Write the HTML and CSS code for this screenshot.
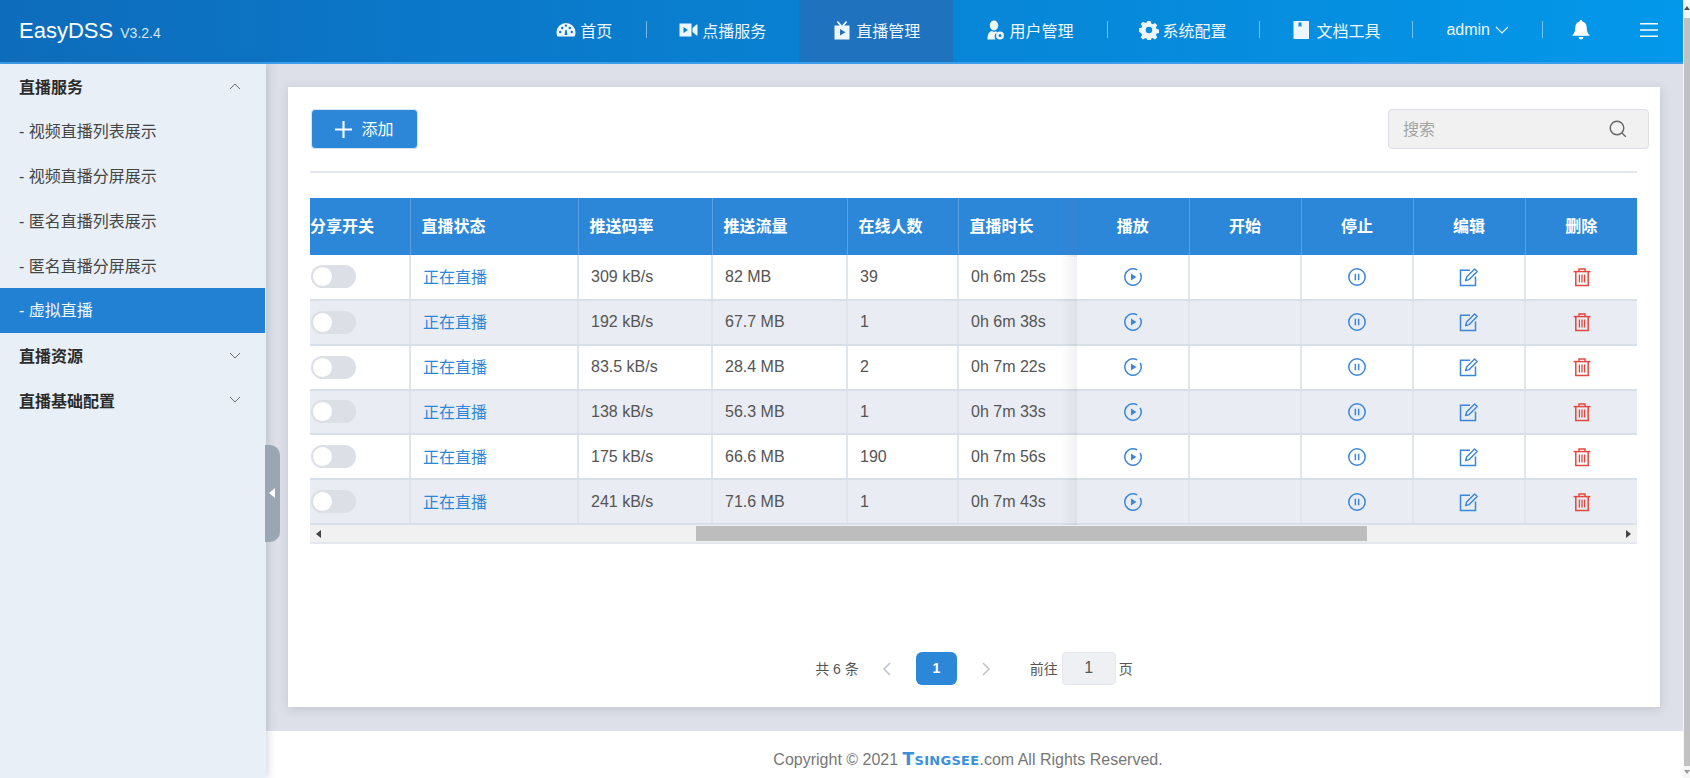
FILE: index.html
```html
<!DOCTYPE html>
<html lang="zh-CN">
<head>
    <meta charset="UTF-8">
    <meta name="viewport" content="width=device-width, initial-scale=1.0">
    <title>EasyDSS</title>
    <link rel="stylesheet" href="styles.css">
</head>
<body>
    <svg class="icon-defs" aria-hidden="true">
        <symbol id="i-play" viewBox="0 0 20 20">
            <circle cx="10" cy="10" r="8.2" fill="none" stroke="currentColor" stroke-width="1.5" stroke-dasharray="47 4.5" transform="rotate(-30 10 10)"/>
            <path d="M8 6.400v7.200l5.400-3.600z" fill="currentColor"/>
        </symbol>
        <symbol id="i-pause" viewBox="0 0 20 20">
            <circle cx="10" cy="10" r="8.2" fill="none" stroke="currentColor" stroke-width="1.5"/>
            <path d="M7.600 6.800h1.500v6.400H7.600zM10.900 6.800h1.500v6.400h-1.500z" fill="currentColor"/>
        </symbol>
        <symbol id="i-edit" viewBox="0 0 20 20">
            <path d="M11 3.200H1.500v15.300h15V9.500" fill="none" stroke="currentColor" stroke-width="1.500"/>
            <path d="M6.600 13.600l1-3.600 8-8 2.600 2.600-8 8z" fill="none" stroke="currentColor" stroke-width="1.400" stroke-linejoin="round"/>
        </symbol>
        <symbol id="i-trash" viewBox="0 0 20 20">
            <path d="M1.600 4.600h16.800" fill="none" stroke="currentColor" stroke-width="1.500"/>
            <path d="M7 4.400V2h6v2.400" fill="none" stroke="currentColor" stroke-width="1.400"/>
            <path d="M3.800 4.600v14h12.400v-14" fill="none" stroke="currentColor" stroke-width="1.500"/>
            <path d="M7.400 7.600v8M10 7.600v8M12.600 7.600v8" fill="none" stroke="currentColor" stroke-width="1.300"/>
        </symbol>
    </svg>

    <div class="app">
        <header class="topbar">
            <div class="logo">EasyDSS <small>V3.2.4</small></div>
            <nav class="nav">
                <a class="nav-item sep nav-home">
                    <svg class="nav-icon" viewBox="0 0 20 20" fill="currentColor"><path fill-rule="evenodd" d="M10 3a9.500 9.500 0 0 0-9.500 9.500c0 1.500.4 2.900 1 4h17c.6-1.100 1-2.500 1-4A9.500 9.500 0 0 0 10 3zM4.200 13.200a1.200 1.200 0 1 1 0-2.400 1.200 1.200 0 0 1 0 2.400zm2-4a1.200 1.200 0 1 1 0-2.400 1.200 1.200 0 0 1 0 2.400zM10 6.800a1.200 1.200 0 1 1 0-2.400 1.200 1.200 0 0 1 0 2.400zm1.400 8.200H8.600l.7-5h1.400zm4.400-1.800a1.200 1.200 0 1 1 0-2.400 1.200 1.200 0 0 1 0 2.400zm-2-4a1.200 1.200 0 1 1 0-2.400 1.200 1.200 0 0 1 0 2.400z"/></svg>
                    首页
                </a>
                <a class="nav-item">
                    <svg class="nav-icon" viewBox="0 0 20 20" fill="currentColor"><path fill-rule="evenodd" d="M1.500 3.500h12v13h-12zM5.500 7v6l4.500-3z"/><path d="M14.500 8l4-3.500h1v11h-1l-4-3.500z"/></svg>
                    点播服务
                </a>
                <a class="nav-item active">
                    <svg class="nav-icon" viewBox="0 0 20 20" fill="currentColor"><path fill-rule="evenodd" d="M2.500 5.500h5.200L4.800 2l1.200-1 4 4.500L14 1l1.200 1-2.900 3.500h5.200v14h-15zM8 9v6.500l5.500-3.200z"/></svg>
                    直播管理
                </a>
                <a class="nav-item sep nav-user">
                    <svg class="nav-icon" viewBox="0 0 20 20" fill="currentColor"><ellipse cx="9" cy="5.500" rx="4.200" ry="5"/><path d="M2.500 19.500c0-4.500 1-8 4.500-8.500l2 .9 1.800-.7c.7.300 1.300.6 1.700 1a4.800 4.800 0 0 0-2 7.300z"/><path fill-rule="evenodd" d="M15 11.500a4 4 0 1 0 0 8 4 4 0 0 0 0-8zm0 2.500a1.500 1.500 0 1 1 0 3 1.500 1.500 0 0 1 0-3z"/></svg>
                    用户管理
                </a>
                <a class="nav-item sep nav-config">
                    <svg class="nav-icon" viewBox="0 0 20 20" fill="currentColor"><path fill-rule="evenodd" d="M8.300 1h3.400l.5 2.600 1.500.7 2.300-1.400 2.300 2.300-1.400 2.300.7 1.500 2.600.5v3.400l-2.600.5-.7 1.500 1.400 2.300-2.300 2.300-2.300-1.400-1.500.7-.5 2.600H8.300l-.5-2.600-1.500-.7-2.300 1.400-2.300-2.300 1.400-2.300-.7-1.500L-.2 11.700V8.300l2.600-.5.7-1.500-1.400-2.300 2.300-2.300 2.300 1.400 1.500-.7zM10 6.800a3.200 3.200 0 1 0 0 6.400 3.200 3.200 0 0 0 0-6.400z"/></svg>
                    系统配置
                </a>
                <a class="nav-item sep nav-doc">
                    <svg class="nav-icon" viewBox="0 0 20 20" fill="currentColor"><path fill-rule="evenodd" d="M2.500 1h15.500v18H2.500zM7.500 2.500v4.500l1.500-1 1.500 1V2.500z"/></svg>
                    文档工具
                </a>
                <a class="nav-item sep nav-admin">
                    admin
                    <svg class="chevron" viewBox="0 0 14 8" fill="none" stroke="currentColor" stroke-width="1.200"><path d="M1 1l6 6 6-6"/></svg>
                </a>
                <a class="nav-tool bell">
                    <svg viewBox="0 0 18 20" fill="currentColor"><path d="M9 0a1.300 1.300 0 0 0-1.300 1.400C4.900 2 3.300 4.200 3.300 7.400c0 4.600-1.500 6.200-2.800 7.400v1h17v-1c-1.300-1.200-2.800-2.800-2.800-7.400 0-3.200-1.600-5.400-4.400-6A1.300 1.300 0 0 0 9 0zM6.500 17a2.500 2.500 0 0 0 5 0z"/></svg>
                </a>
                <a class="nav-tool menu">
                    <svg viewBox="0 0 18 14" fill="currentColor"><path d="M0 0h18v1.600H0zM0 6.200h18v1.600H0zM0 12.400h18V14H0z"/></svg>
                </a>
            </nav>
        </header>

        <div class="layout">
            <aside class="sidebar">
                <div class="menu-title">直播服务
                    <svg class="menu-arrow" viewBox="0 0 12 7" fill="none" stroke="currentColor"><path d="M1 6l5-5 5 5"/></svg>
                </div>
                <div class="menu-item">- 视频直播列表展示</div>
                <div class="menu-item">- 视频直播分屏展示</div>
                <div class="menu-item">- 匿名直播列表展示</div>
                <div class="menu-item">- 匿名直播分屏展示</div>
                <div class="menu-item selected">- 虚拟直播</div>
                <div class="menu-title">直播资源
                    <svg class="menu-arrow" viewBox="0 0 12 7" fill="none" stroke="currentColor"><path d="M1 1l5 5 5-5"/></svg>
                </div>
                <div class="menu-title">直播基础配置
                    <svg class="menu-arrow" viewBox="0 0 12 7" fill="none" stroke="currentColor"><path d="M1 1l5 5 5-5"/></svg>
                </div>
                <div class="collapse-handle"></div>
            </aside>

            <div class="content">
                <main class="main">
                    <section class="card">
                        <div class="toolbar">
                            <button class="add-btn">
                                <svg viewBox="0 0 16 16" fill="currentColor"><path d="M7 0h2v7h7v2H9v7H7V9H0V7h7z"/></svg>
                                <span>添加</span>
                            </button>
                            <div class="search">
                                <span>搜索</span>
                                <svg viewBox="0 0 18 18" fill="none" stroke="currentColor" stroke-width="1.400"><circle cx="8" cy="8" r="6.800"/><path d="M13 13l3.800 3.800"/></svg>
                            </div>
                        </div>

                        <div class="table-wrap">
                            <table class="live-table">
                                <colgroup>
                                    <col class="c-share"><col class="c-status"><col class="c-rate"><col class="c-flow"><col class="c-online"><col class="c-time">
                                    <col class="c-op"><col class="c-op"><col class="c-op"><col class="c-op"><col class="c-op">
                                </colgroup>
                                <thead>
                                    <tr>
                                        <th class="share">分享开关</th><th>直播状态</th><th>推送码率</th><th>推送流量</th><th>在线人数</th><th>直播时长</th>
                                        <th class="op first-op">播放</th><th class="op">开始</th><th class="op">停止</th><th class="op">编辑</th><th class="op">删除</th>
                                    </tr>
                                </thead>
                                <tbody id="rows"></tbody>
                            </table>
                            <div class="hscroll">
                                <span class="arrow-left"></span>
                                <div class="hscroll-track"><div class="hscroll-thumb"></div></div>
                                <span class="arrow-right"></span>
                            </div>
                        </div>

                        <div class="pager">
                            <span class="pager-text">共 6 条</span>
                            <svg class="pager-arrow prev" viewBox="0 0 9 14" fill="none" stroke="currentColor" stroke-width="1.600"><path d="M8 1L2 7l6 6"/></svg>
                            <span class="page-num">1</span>
                            <svg class="pager-arrow next" viewBox="0 0 9 14" fill="none" stroke="currentColor" stroke-width="1.600"><path d="M1 1l6 6-6 6"/></svg>
                            <span class="pager-text goto">前往</span>
                            <span class="page-input">1</span>
                            <span class="pager-text page-unit">页</span>
                        </div>
                    </section>
                </main>
                <footer class="footer">Copyright © 2021 <span class="brand"><b>T</b>SINGSEE</span>.com All Rights Reserved.</footer>
            </div>
        </div>
    </div>

    <div class="page-scroll">
        <span class="page-scroll-up"></span>
        <div class="page-scroll-thumb"></div>
        <span class="page-scroll-down"></span>
    </div>

    <script>
        const streams = [
            ['309 kB/s', '82 MB', '39', '0h 6m 25s'],
            ['192 kB/s', '67.7 MB', '1', '0h 6m 38s'],
            ['83.5 kB/s', '28.4 MB', '2', '0h 7m 22s'],
            ['138 kB/s', '56.3 MB', '1', '0h 7m 33s'],
            ['175 kB/s', '66.6 MB', '190', '0h 7m 56s'],
            ['241 kB/s', '71.6 MB', '1', '0h 7m 43s']
        ];

        function iconCell(name, cls) {
            return `<td class="op ${cls}"><svg class="row-icon ${name}"><use href="#i-${name}"></use></svg></td>`;
        }

        // Build table rows
        document.getElementById('rows').innerHTML = streams.map(s => `
            <tr>
                <td class="share"><span class="switch"></span></td>
                <td><a class="live-link">正在直播</a></td>
                <td>${s[0]}</td><td>${s[1]}</td><td>${s[2]}</td><td>${s[3]}</td>
                ${iconCell('play', 'first-op')}
                <td class="op"></td>
                ${iconCell('pause', '')}
                ${iconCell('edit', '')}
                ${iconCell('trash', '')}
            </tr>`).join('');
    </script>
</body>
</html>
```
FILE: styles.css
```css
* {
    margin: 0;
    padding: 0;
    box-sizing: border-box;
}

html, body {
    height: 100%;
    overflow: hidden;
}

body {
    display: flex;
    font-family: 'Liberation Sans', 'Noto Sans CJK SC', sans-serif;
    font-size: 16px;
    color: #555;
}

.icon-defs {
    display: none;
}

.app {
    flex: 1;
    min-width: 0;
    display: flex;
    flex-direction: column;
}

/* top bar */
.topbar {
    height: 64px;
    flex: none;
    display: flex;
    align-items: center;
    justify-content: space-between;
    color: #fff;
    background: linear-gradient(90deg, #0e6cbc 0%, #0398ea 100%);
    border-bottom: 2px solid #3a9eec;
}

.logo {
    padding-left: 19px;
    font-size: 22px;
}

.logo small {
    font-size: 14px;
    margin-left: 1px;
    color: #d7e7f5;
}

.nav {
    display: flex;
    align-items: center;
    height: 100%;
}

.nav-item {
    position: relative;
    display: flex;
    align-items: center;
    height: 100%;
    padding: 0 33px 3px;
    color: #eef6fd;
}

.nav-item.sep::after {
    content: '';
    position: absolute;
    right: 0;
    top: 21px;
    height: 17px;
    width: 1px;
    background: rgba(255, 255, 255, 0.45);
}

.nav-home.sep::after {
    right: -2px;
}

.nav-user {
    padding-left: 32px;
}

.nav-user.sep::after {
    right: -2px;
}

.nav-config .nav-icon {
    margin-right: 3px;
}

.nav-config.sep::after {
    right: -1px;
}

.nav-doc {
    padding-left: 32px;
}

.nav-doc .nav-icon {
    margin-right: 5px;
}

.nav-admin {
    padding-left: 33px;
    padding-right: 34px;
}

.nav-item.active {
    background: #1f72bd;
}

.nav-icon {
    width: 20px;
    height: 20px;
    margin-right: 4px;
}

.chevron {
    width: 14px;
    height: 8px;
    margin-left: 5px;
}

.nav-tool {
    display: flex;
    align-items: center;
    padding-bottom: 2px;
}

.bell {
    margin-left: 29px;
}

.bell svg {
    width: 18px;
    height: 20px;
}

.menu {
    margin-left: 50px;
    margin-right: 25px;
}

.menu svg {
    width: 18px;
    height: 14px;
}

/* sidebar */
.layout {
    flex: 1;
    min-height: 0;
    display: flex;
}

.sidebar {
    position: relative;
    width: 266px;
    flex: none;
    padding-right: 1px;
    background: #e8eff7;
    box-shadow: 2px 0 8px rgba(90, 100, 120, 0.25);
    z-index: 2;
}

.menu-title,
.menu-item {
    display: flex;
    align-items: center;
    height: 44.8px;
    padding-left: 19px;
    color: #454545;
}

.menu-item {
    padding-bottom: 2px;
}

.menu-title {
    justify-content: space-between;
    padding-right: 24px;
    font-weight: bold;
    color: #2b2b2b;
}

.menu-arrow {
    width: 12px;
    height: 7px;
    color: #6d6d6d;
}

.menu-item.selected {
    background: #2381d4;
    color: #f2f7fc;
}

.collapse-handle {
    position: absolute;
    left: 100%;
    top: 381px;
    width: 15px;
    height: 97px;
    margin-left: -1px;
    background: #9ba6b4;
    border-radius: 0 10px 10px 0;
}

.collapse-handle::after {
    content: '';
    position: absolute;
    left: 4px;
    top: 43px;
    border: 5px solid transparent;
    border-left: 0;
    border-right: 6px solid #fff;
}

/* main area */
.content {
    flex: 1;
    min-width: 0;
    display: flex;
    flex-direction: column;
}

.main {
    flex: 1;
    min-height: 0;
    padding: 23px 23px 24px 22px;
    background: #dde0e8;
}

.card {
    display: flex;
    flex-direction: column;
    height: 100%;
    padding: 22px 23px 22px 22px;
    background: #fff;
    box-shadow: 0 2px 10px rgba(60, 70, 90, 0.18);
}

.toolbar {
    display: flex;
    justify-content: space-between;
    height: 64px;
    flex: none;
    border-bottom: 2px solid #e4e7ed;
}

.add-btn {
    display: flex;
    align-items: center;
    justify-content: center;
    gap: 9px;
    width: 107px;
    height: 40px;
    margin-left: 1px;
    border: 1px solid #d7e6f5;
    border-radius: 4px;
    background: #2d87d9;
    color: #fff;
    font: inherit;
}

.add-btn span {
    padding-bottom: 2px;
}

.add-btn svg {
    width: 17px;
    height: 17px;
}

.search {
    display: flex;
    align-items: center;
    justify-content: space-between;
    width: 261px;
    height: 40px;
    margin-right: -12px;
    padding: 0 21px 0 14px;
    background: #f1f1f1;
    border: 1px solid #dcdfe6;
    border-radius: 4px;
    color: #a3a3a3;
}

.search span {
    padding-bottom: 2px;
}

.search svg {
    width: 18px;
    height: 18px;
    color: #666;
}

/* table */
.table-wrap {
    margin-top: 25px;
    border-bottom: 2px solid #e4e7ed;
}

.live-table {
    width: 1327px;
    table-layout: fixed;
    border-collapse: collapse;
}

.c-share { width: 100px; }
.c-status { width: 168px; }
.c-rate { width: 134px; }
.c-flow { width: 135px; }
.c-online { width: 111px; }
.c-time { width: 119px; }
.c-op { width: 112px; }

.live-table th {
    height: 57px;
    padding: 0 0 3px 11px;
    text-align: left;
    color: #fff;
    background: #2d87d9;
    border-right: 1px solid #5a9fdf;
}

.live-table td {
    height: 44.85px;
    padding-left: 12px;
    color: #555;
    border-right: 2px solid #e0e5ec;
    border-bottom: 2px solid #d8dfe8;
}

.live-table tbody tr:nth-child(even) td {
    background: #e9ecf2;
}

.live-table th.share,
.live-table td.share {
    padding-left: 0;
}

.live-table th.op,
.live-table td.op {
    padding-left: 0;
    text-align: center;
}

.live-table th:last-child,
.live-table td:last-child {
    border-right: none;
}

/* the last scrolled column runs under the fixed ones, no line of its own */
.live-table th:nth-child(6),
.live-table td:nth-child(6) {
    border-right: none;
}

.first-op {
    position: relative;
}

.first-op::before {
    content: '';
    position: absolute;
    top: 0;
    bottom: -2px;
    right: 100%;
    width: 16px;
    background: linear-gradient(to left, rgba(110, 120, 140, 0.1), rgba(110, 120, 140, 0));
}

.live-link {
    position: relative;
    top: -1px;
    color: #2d87d9;
}

.switch {
    display: block;
    position: relative;
    width: 45px;
    height: 23px;
    margin-left: 1px;
    background: #dcdfe6;
    border-radius: 12px;
}

.switch::after {
    content: '';
    position: absolute;
    left: 2px;
    top: 2px;
    width: 19px;
    height: 19px;
    background: #fff;
    border-radius: 50%;
}

.row-icon {
    display: block;
    width: 20px;
    height: 20px;
    margin: 0 auto;
    color: #3b86d9;
}

.row-icon.trash {
    color: #e1483f;
}

.hscroll {
    display: flex;
    align-items: center;
    height: 17px;
    background: #f1f1f1;
}

.hscroll-track {
    flex: 1;
    height: 15px;
    padding-left: 369px;
}

.hscroll-thumb {
    width: 671px;
    height: 100%;
    background: #bdbdbd;
}

.arrow-left,
.arrow-right {
    width: 17px;
    height: 8px;
    position: relative;
}

.arrow-left::after,
.arrow-right::after {
    content: '';
    position: absolute;
    top: 0;
    left: 6px;
    border: 4px solid transparent;
}

.arrow-left::after {
    border-left: 0;
    border-right: 5px solid #444;
}

.arrow-right::after {
    border-right: 0;
    border-left: 5px solid #444;
}

/* pagination */
.pager {
    display: flex;
    align-items: center;
    justify-content: center;
    height: 33px;
    margin-top: auto;
    padding-left: 1px;
    font-size: 14px;
    color: #555;
}

.pager-text {
    padding-bottom: 2px;
}

.pager-arrow {
    width: 9px;
    height: 14px;
    color: #c0c4cc;
}

.prev {
    margin-left: 23px;
}

.page-num {
    width: 41px;
    height: 33px;
    margin-left: 25px;
    line-height: 32px;
    text-align: center;
    font-weight: bold;
    color: #fff;
    background: #2d87d9;
    border-radius: 6px;
}

.next {
    margin-left: 25px;
}

.goto {
    margin-left: 39px;
}

.page-input {
    width: 54px;
    height: 33px;
    margin-left: 4px;
    line-height: 30px;
    text-align: center;
    font-size: 16px;
    background: #eef0f4;
    border: 1px solid #e4e7ed;
    border-radius: 4px;
}

.page-unit {
    margin-left: 3px;
}

/* footer */
.footer {
    flex: none;
    height: 47px;
    padding-right: 13px;
    line-height: 56px;
    text-align: center;
    color: #777;
    background: #fff;
}

.brand {
    font-family: 'DejaVu Sans', sans-serif;
    font-weight: bold;
    font-size: 13px;
    letter-spacing: 0.3px;
    color: #3b8fdc;
}

.brand b {
    font-size: 17px;
}

/* page scrollbar */
.page-scroll {
    position: relative;
    width: 7px;
    flex: none;
    background: #f6f6f6;
}

.page-scroll-up,
.page-scroll-down {
    position: absolute;
    left: 1px;
    border: 3px solid transparent;
}

.page-scroll-up {
    top: 6px;
    border-top: 0;
    border-bottom: 4px solid #505050;
}

.page-scroll-down {
    bottom: 4px;
    border-bottom: 0;
    border-top: 4px solid #9a9a9a;
}

.page-scroll-thumb {
    position: absolute;
    left: 1px;
    right: 0;
    top: 18px;
    height: 748px;
    background: #c1c1c1;
}
```
